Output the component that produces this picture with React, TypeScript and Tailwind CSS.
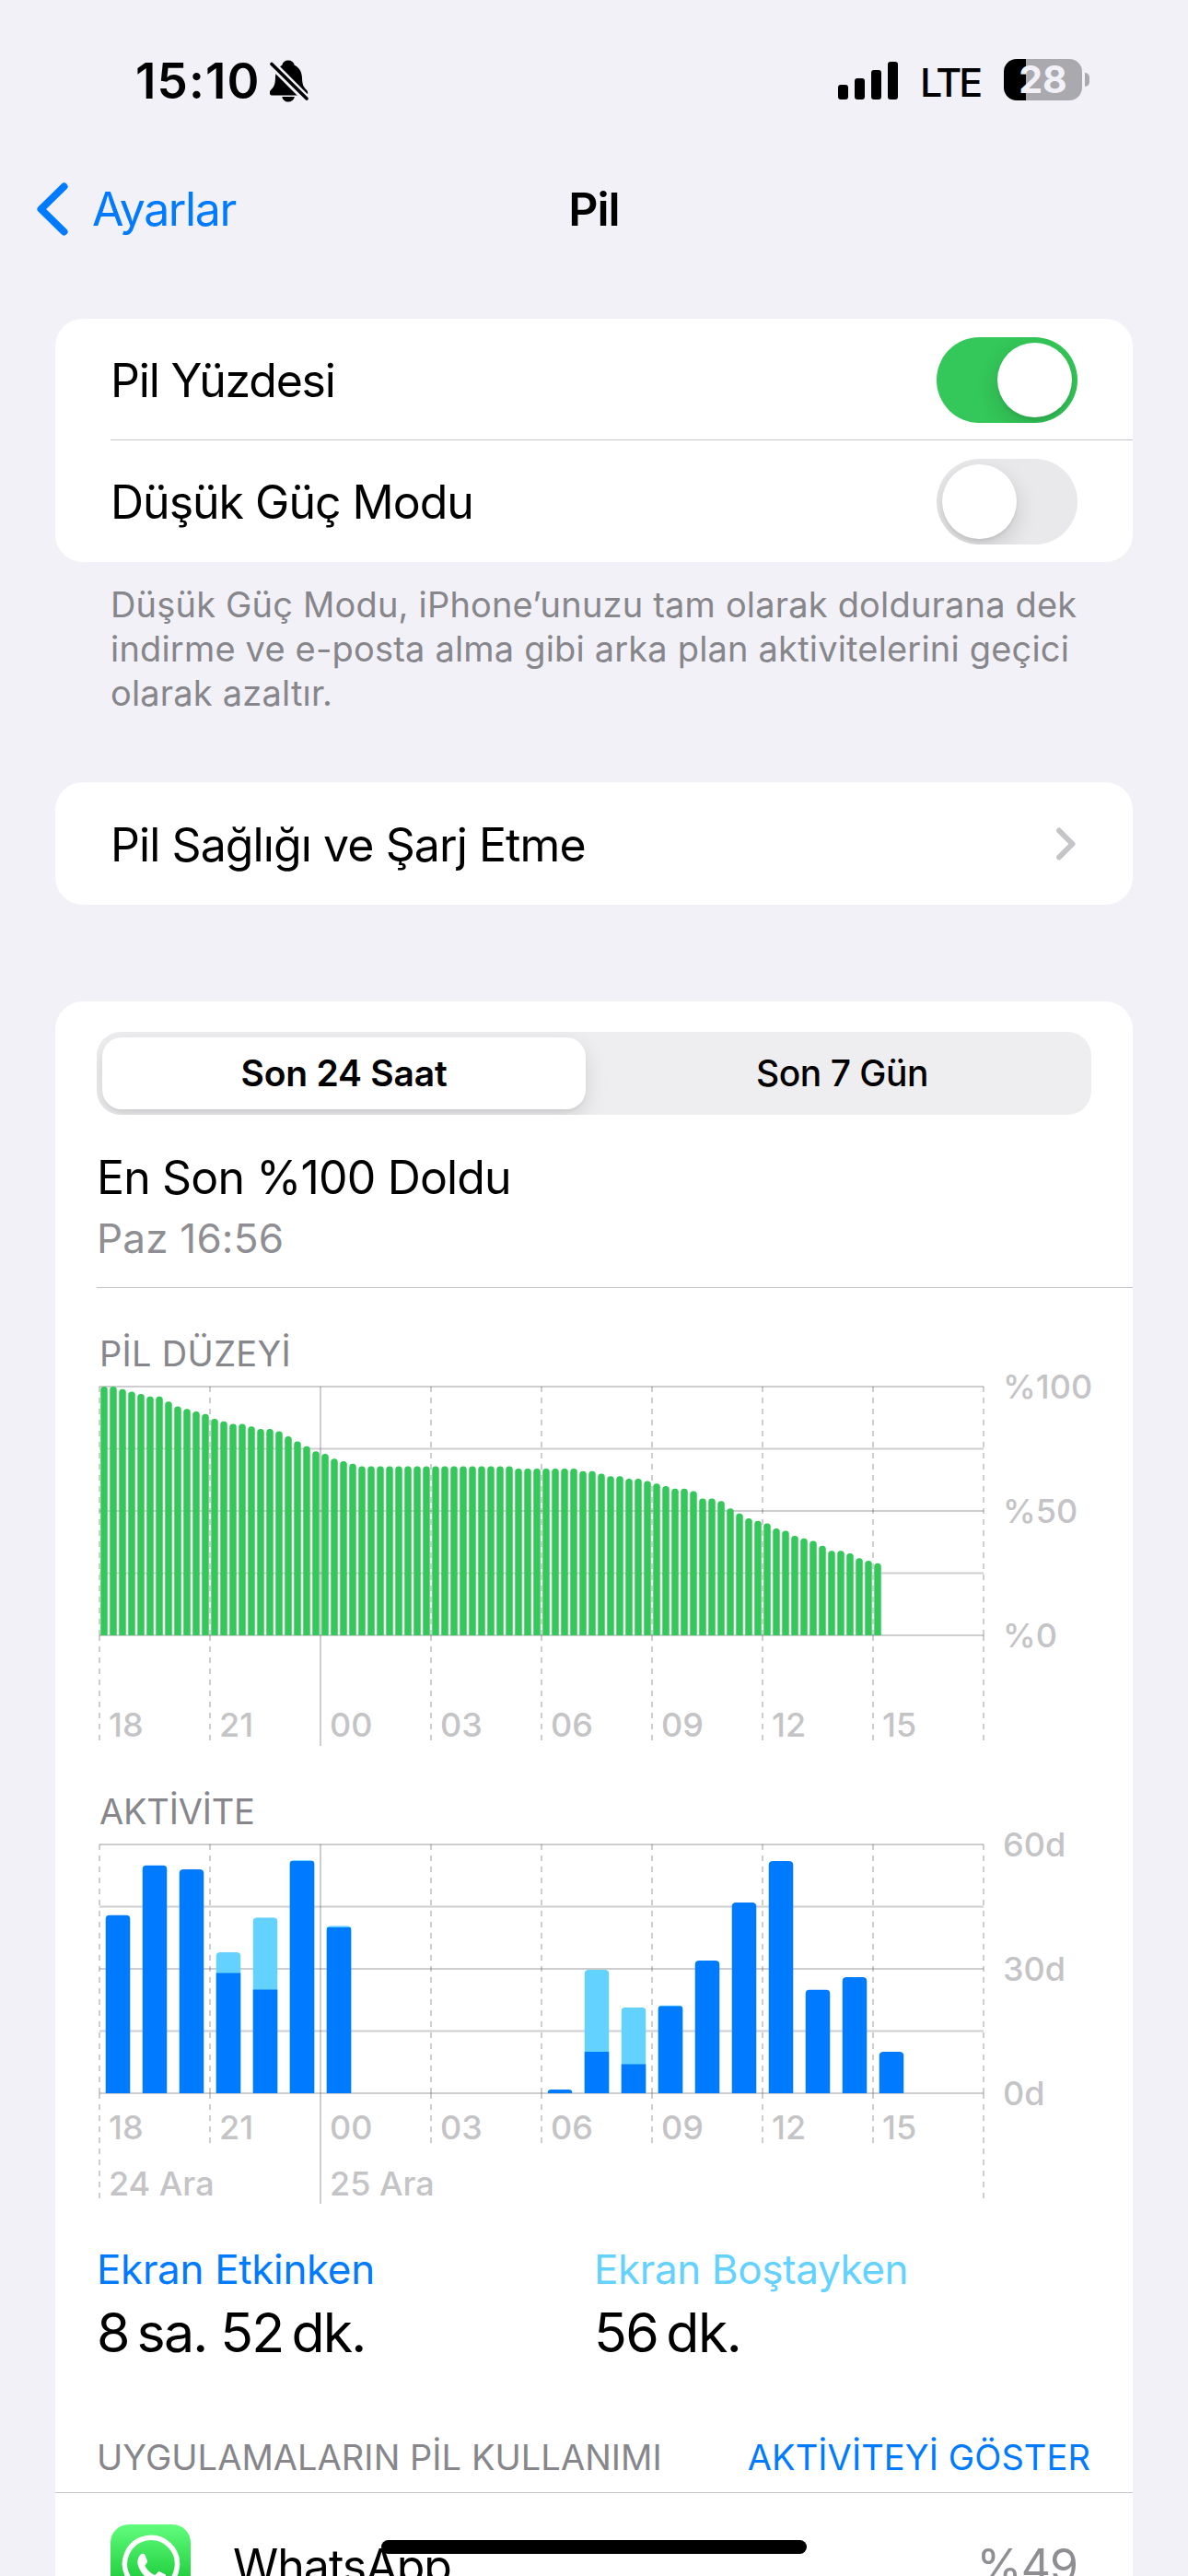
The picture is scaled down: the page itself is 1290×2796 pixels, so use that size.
import clsx from "clsx";

const batteryLevels = [
  100, 100, 99, 98, 97, 96, 96, 94, 92, 91, 90, 89, 87, 86, 85, 85, 84, 83, 83,
  82, 80, 78, 76, 74, 73, 71, 70, 69, 68, 68, 68, 68, 68, 68, 68, 68, 68, 68,
  68, 68, 68, 68, 68, 68, 68, 67, 67, 67, 67, 67, 67, 67, 66, 66, 65, 64, 64,
  63, 63, 62, 61, 60, 59, 59, 58, 55, 55, 54, 51, 49, 47, 46, 45, 43, 42, 40,
  39, 38, 36, 34, 34, 33, 31, 30, 29,
];

// minutes per hour: [hour slot, screen on, total]
const activity = [
  [0, 43, 43],
  [1, 55, 55],
  [2, 54, 54],
  [3, 29, 34],
  [4, 25, 42.4],
  [5, 56, 56.2],
  [6, 40, 40.4],
  [12, 0.9, 0.9],
  [13, 10, 29.8],
  [14, 7, 20.7],
  [15, 21, 21.2],
  [16, 32, 32],
  [17, 46, 46],
  [18, 56, 56],
  [19, 25, 25],
  [20, 28, 28],
  [21, 10, 10],
];

const hours = ["18", "21", "00", "03", "06", "09", "12", "15"];

const PLOT_X = 3;
const PLOT_Y = 13;
const PLOT_H = 270;
const BASE_Y = PLOT_Y + PLOT_H;

function barPath(x: number, width: number, height: number, radius: number) {
  const r = Math.min(radius, height);
  const top = BASE_Y - height;
  return `M${x} ${BASE_Y}V${top + r}q0 ${-r} ${r} ${-r}h${width - 2 * r}q${r} 0 ${r} ${r}V${BASE_Y}z`;
}

type ChartProps = {
  height: number;
  labels: string[];
  hourY: number;
  tickEnd: number;
  edgeEnd: number;
  dayEnd: number;
  children: React.ReactNode;
};

function Chart({
  height,
  labels,
  hourY,
  tickEnd,
  edgeEnd,
  dayEnd,
  children,
}: ChartProps) {
  return (
    <svg
      width="1125"
      height={height}
      viewBox={`0 0 1125 ${height}`}
      className="block overflow-visible text-[36px] font-medium"
    >
      <g stroke="#3c3c43" strokeOpacity="0.25" strokeWidth="2">
        {[0, 1, 2, 3, 4].map((i) => (
          <path key={i} d={`M${PLOT_X} ${PLOT_Y + i * 67.5}h960`} />
        ))}
        {[0, 1, 2, 3, 4, 5, 6, 7, 8].map((i) => {
          const x = PLOT_X + i * 120;
          const midnight = i === 2;
          const edge = i === 0 || i === 8;
          const end = midnight ? dayEnd : edge ? edgeEnd : tickEnd;
          return (
            <path
              key={i}
              d={`M${x} ${PLOT_Y}V${BASE_Y}M${x} ${BASE_Y}V${end}`}
              strokeDasharray={midnight ? undefined : "6 6"}
            />
          );
        })}
      </g>
      {children}
      <g fill="#c4c4c6">
        {hours.map((hour, i) => (
          <text key={hour} x={PLOT_X + 10 + i * 120} y={hourY}>
            {hour}
          </text>
        ))}
        {labels.map((label, i) => (
          <text key={label} x="984" y={PLOT_Y + 13 + i * 135}>
            {label}
          </text>
        ))}
      </g>
    </svg>
  );
}

function BatteryChart() {
  return (
    <Chart
      height={408}
      labels={["%100", "%50", "%0"]}
      hourY={393}
      tickEnd={397}
      edgeEnd={397}
      dayEnd={403}
    >
      {batteryLevels.map((level, i) => (
        <path
          key={i}
          fill="#34c759"
          d={barPath(PLOT_X + 1.25 + i * 10, 7.5, level * 2.7, 3.5)}
        />
      ))}
    </Chart>
  );
}

function ActivityChart() {
  return (
    <Chart
      height={411}
      labels={["60d", "30d", "0d"]}
      hourY={333}
      tickEnd={337}
      edgeEnd={397}
      dayEnd={403}
    >
      <defs>
        {activity.map(([slot, , total]) => (
          <clipPath key={slot} id={`slot-${slot}`}>
            <path d={barPath(PLOT_X + 6.5 + slot * 40, 27, total * 4.5, 5)} />
          </clipPath>
        ))}
      </defs>
      {activity.map(([slot, active, total]) => (
        <g key={slot} clipPath={`url(#slot-${slot})`}>
          {total > active && (
            <rect
              x={PLOT_X + 6.5 + slot * 40}
              y={BASE_Y - total * 4.5}
              width="27"
              height={total * 4.5}
              fill="#64d2ff"
            />
          )}
          <rect
            x={PLOT_X + 6.5 + slot * 40}
            y={BASE_Y - active * 4.5}
            width="27"
            height={active * 4.5}
            fill="#007aff"
          />
        </g>
      ))}
      <g fill="#c4c4c6">
        <text x="13" y="394">
          24 Ara
        </text>
        <text x="253" y="394">
          25 Ara
        </text>
      </g>
    </Chart>
  );
}

function Switch({ on }: { on: boolean }) {
  return (
    <div
      role="switch"
      aria-checked={on}
      className={clsx(
        "flex h-[93px] w-[153px] items-center overflow-hidden rounded-full px-[6px]",
        on ? "justify-end bg-[#34c759]" : "justify-start bg-[#e9e9eb]"
      )}
    >
      <div className="size-[81px] rounded-full bg-white shadow-[0_9px_24px_rgba(0,0,0,0.15),0_3px_3px_rgba(0,0,0,0.06)]" />
    </div>
  );
}

function StatusBar() {
  return (
    <div className="flex h-[176px] shrink-0 items-center justify-between pr-[107px] pl-[147px]">
      <div className="flex items-center">
        <span className="w-[146px] text-[53px] leading-[60px] font-semibold tracking-[1.100px]">
          15:10
        </span>
        <svg width="42" height="46" viewBox="0 0 42 46">
          <path d="M20 .5c3.600 0 6 2 6.800 5.300 5 2.300 8 7.200 8.200 13.700.2 7.500 1.500 9.800 5 13.300 2.200 2.300 1.500 5.700-2 5.700H3c-3.500 0-4.200-3.400-2-5.700 3.500-3.600 4.800-6 5-13.300.2-6.500 3-11.400 7.300-13.700C14 2.500 16.400.5 20 .5zM13.300 40h13.600c-.8 3.600-3.400 5.500-6.800 5.500S14 43.600 13.300 40z" />
          <path d="M1.500 4 40 42.500" stroke="#f2f1f8" strokeWidth="9" />
          <path
            d="M2 4.500 40 42"
            stroke="#000"
            strokeWidth="3.600"
            strokeLinecap="round"
          />
        </svg>
      </div>
      <div className="flex items-center">
        <svg width="66" height="42" viewBox="0 0 66 42">
          <rect y="25" width="11" height="16" rx="3" />
          <rect x="18" y="18" width="11" height="23" rx="3" />
          <rect x="36" y="9" width="11" height="32" rx="3" />
          <rect x="54" width="11" height="41" rx="3" />
        </svg>
        <span className="ml-[23px] w-[91px] pt-[2px] text-[43px] leading-[54px] font-medium tracking-[-3px]">
          LTE
        </span>
        <div className="flex items-center gap-[3px] pb-[3px]">
          <div className="flex h-[45px] w-[85px] items-center justify-center rounded-[14px] bg-linear-to-r from-black from-[24px] to-[#a9a9ae] to-[24px] text-[41px] leading-[45px] font-bold text-[#f2f1f8]">
            28
          </div>
          <div className="h-[15px] w-[5px] rounded-r-full bg-[#a9a9ae]" />
        </div>
      </div>
    </div>
  );
}

function NavBar() {
  return (
    <div className="grid h-[102px] shrink-0 grid-cols-[1fr_auto_1fr] items-center px-[39px] text-[50px] leading-[60px]">
      <div className="flex items-center text-[#007aff]">
        <svg width="36" height="60" viewBox="0 0 36 60" fill="none">
          <path
            d="M30.500 5.500 5.500 30l25 24.500"
            stroke="currentColor"
            strokeWidth="8"
            strokeLinecap="round"
            strokeLinejoin="round"
          />
        </svg>
        <span className="ml-[25px] tracking-[-1.400px]">Ayarlar</span>
      </div>
      <h1 className="font-semibold tracking-[-1px]">Pil</h1>
    </div>
  );
}

export default function App() {
  return (
    <div className="relative flex h-[2796px] w-[1290px] flex-col overflow-hidden bg-[#f2f1f8] font-[Inter,sans-serif] text-black">
      <StatusBar />
      <NavBar />

      <main className="px-[60px] pt-[68px]">
        <section className="rounded-[30px] bg-white pl-[60px] text-[50px] leading-[60px] tracking-[-1px]">
          <div className="flex h-[132px] items-center justify-between border-b border-[#c6c6c8] pt-px pr-[60px]">
            <span className="pt-[2px] tracking-[-1.200px]">Pil Yüzdesi</span>
            <Switch on />
          </div>
          <div className="flex h-[132px] items-center justify-between pr-[60px]">
            <span className="pt-[2px]">Düşük Güç Modu</span>
            <Switch on={false} />
          </div>
        </section>
        <p className="mt-[22px] px-[60px] text-[38px] leading-[48px] tracking-[0.180px] whitespace-nowrap text-[#86868b]">
          Düşük Güç Modu, iPhone’unuzu tam olarak doldurana dek
          <br />
          indirme ve e-posta alma gibi arka plan aktivitelerini geçici
          <br />
          olarak azaltır.
        </p>

        <section className="mt-[73px] flex h-[133px] items-center justify-between rounded-[30px] bg-white px-[60px] text-[50px] leading-[60px] tracking-[-0.920px]">
          <span className="pt-[2px]">Pil Sağlığı ve Şarj Etme</span>
          <svg width="24" height="38" viewBox="0 0 24 38" fill="none">
            <path
              d="M4 4.500 18.500 19 4 33.500"
              stroke="#c5c5c7"
              strokeWidth="6"
              strokeLinecap="round"
              strokeLinejoin="round"
            />
          </svg>
        </section>

        <section className="mt-[105px] rounded-t-[30px] bg-white pt-[33px]">
          <div className="mx-[45px] grid h-[90px] grid-cols-2 overflow-hidden rounded-[26px] bg-[#eeeef0] p-[6px] text-center text-[39px] leading-[78px]">
            <div className="mr-[9px] rounded-[21px] bg-white font-semibold tracking-[-0.200px] shadow-[0_9px_24px_rgba(0,0,0,0.12),0_3px_3px_rgba(0,0,0,0.04)]">
              Son 24 Saat
            </div>
            <div className="pl-[5px] font-medium tracking-[-0.500px]">
              Son 7 Gün
            </div>
          </div>

          <div className="mt-[38px] ml-[45px] border-b border-[#c6c6c8] pb-[27px]">
            <div className="text-[50px] leading-[60px] tracking-[-0.850px]">
              En Son %100 Doldu
            </div>
            <div className="mt-[10px] text-[44px] leading-[52px] tracking-[0.200px] text-[#8e8e93]">
              Paz 16:56
            </div>
          </div>

          <div className="pl-[45px]">
            <h2 className="mt-[48px] pl-[3px] text-[38px] leading-[46px] tracking-[0.300px] text-[#86868b]">
              PİL DÜZEYİ
            </h2>
            <BatteryChart />
            <h2 className="mt-[43px] pl-[3px] text-[38px] leading-[46px] tracking-[-0.200px] text-[#86868b]">
              AKTİVİTE
            </h2>
            <ActivityChart />
          </div>

          <div className="mt-[37px] grid grid-cols-2 px-[45px]">
            <div>
              <div className="text-[44px] leading-[52px] tracking-[-0.350px] text-[#007aff]">
                Ekran Etkinken
              </div>
              <div className="mt-[8px] text-[59px] leading-[70px] tracking-[-1.800px]">
                8&#8201;sa. 52&#8201;dk.
              </div>
            </div>
            <div>
              <div className="text-[44px] leading-[52px] tracking-[-0.400px] text-[#64d2ff]">
                Ekran Boştayken
              </div>
              <div className="mt-[8px] text-[59px] leading-[70px] tracking-[-1.600px]">
                56&#8201;dk.
              </div>
            </div>
          </div>

          <div className="mt-[77px] flex justify-between border-b border-[#c6c6c8] pr-[46px] pb-[15px] pl-[45px] text-[38px] leading-[46px]">
            <h2 className="tracking-[0.050px] text-[#86868b]">
              UYGULAMALARIN PİL KULLANIMI
            </h2>
            <span className="tracking-[0.100px] text-[#007aff]">
              AKTİVİTEYİ GÖSTER
            </span>
          </div>

          <div className="flex items-center px-[60px] pt-[34px] text-[50px] leading-[60px] tracking-[-1px]">
            <svg width="87" height="87" viewBox="0 0 87 87">
              <defs>
                <linearGradient id="wa" x1="0" y1="0" x2="0" y2="1">
                  <stop offset="0" stopColor="#61fd7d" />
                  <stop offset="1" stopColor="#04b921" />
                </linearGradient>
              </defs>
              <rect width="87" height="87" rx="20" fill="url(#wa)" />
              <path
                d="M15 73l4.500-15.500A28.500 28.500 0 1 1 30.500 68z"
                fill="none"
                stroke="#fff"
                strokeWidth="5.500"
                strokeLinejoin="round"
              />
              <path
                d="M33.500 32c1.500-.6 3.500-.2 4 1.200l2.600 6.500c.5 1.500-2.800 4.500-2.600 5.500 2.200 4.300 6 7.800 10.500 9.700 1.200 0 3.700-4.200 4.900-3.900l6.700 3.300c1 .7.6 4.200-.6 6-2 2.800-6.200 4-9.500 3.200C40 61 31.500 52 29.500 43c-.6-4 .8-9 4-11z"
                fill="#fff"
              />
            </svg>
            <span className="ml-[46px] flex-1 pt-[3px]">WhatsApp</span>
            <span className="pt-[3px] text-[#8e8e93]">%49</span>
          </div>
        </section>
      </main>

      <div className="absolute bottom-[24px] left-[414px] h-[15px] w-[462px] rounded-full bg-black" />
    </div>
  );
}
